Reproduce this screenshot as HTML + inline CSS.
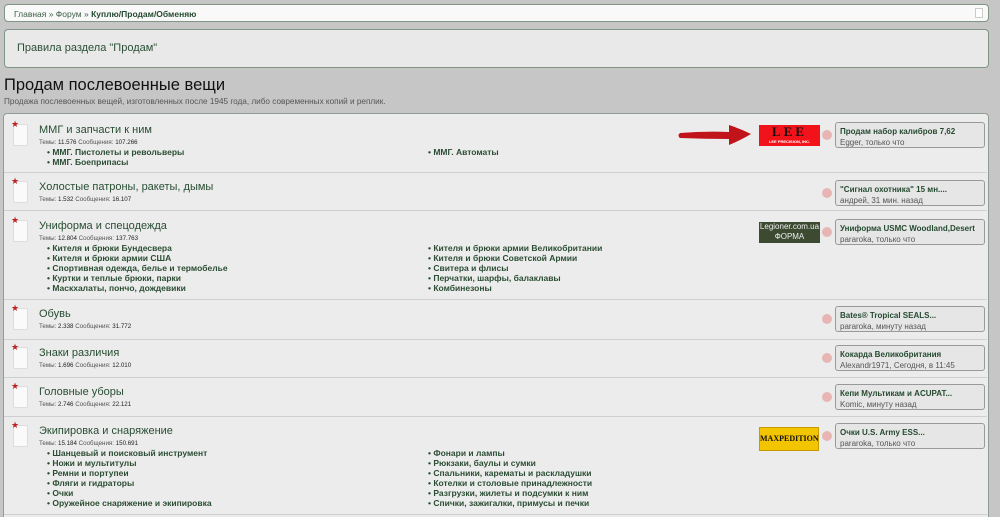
<!DOCTYPE html>
<html><head><meta charset="utf-8"><style>
*{margin:0;padding:0;box-sizing:border-box}
html,body{width:1000px;height:517px;overflow:hidden}
body{background:#c6c6c6;font-family:"Liberation Sans","DejaVu Sans",sans-serif;position:relative}
.a{position:absolute}
.bc{left:4px;top:4px;width:985px;height:18px;background:#f9f9f9;border:1px solid #7f9585;border-radius:4px;font-size:8.5px;color:#3d5f47;padding:4px 0 0 9px}
.bc b{color:#254a30}
.rules{left:4px;top:29px;width:985px;height:39px;background:#e9e9e9;border:1px solid #7f9585;border-radius:4px;font-size:11px;color:#2a4f35;padding:12px 0 0 12px}
h1{position:absolute;left:4px;top:76px;font-size:16.5px;font-weight:normal;color:#111}
.desc{left:4px;top:97px;font-size:8.2px;color:#555}
.box{left:3px;top:113px;width:986px;height:420px;background:#ececec;border:1px solid #8e9e93;border-radius:4px}
.sep{left:4px;width:983px;height:1px;background:#cfcfcf}
.ic{width:15px;height:22px;background:#fafafa;border:1px solid #ddd;border-radius:2px}
.st{color:#b22;font-size:9px}
.t{font-size:11px;color:#284d33}
.s{font-size:6.2px;color:#555}
.s b{font-weight:normal;color:#222}
.sub{font-size:8.5px;font-weight:bold;color:#2b4d33;line-height:10px}
.lp{left:835px;width:150px;height:26px;background:#e6e6e6;border:1px solid #999;border-radius:3px;font-size:8px;padding:3px 0 0 4px;line-height:11px}
.lp b{color:#254a30}
.lp span{color:#555}
.rss{width:10px;height:10px;border-radius:50%;background:#e8b5b5;left:822px}
</style></head><body>
<div class="a bc">Главная » Форум » <b>Куплю/Продам/Обменяю</b></div>
<div class="a" style="left:975px;top:8px;width:8px;height:10px;background:#fff;border:1px solid #ccc"></div>
<div class="a rules">Правила раздела "Продам"</div>
<h1>Продам послевоенные вещи</h1>
<div class="a desc">Продажа послевоенных вещей, изготовленных после 1945 года, либо современных копий и реплик.</div>
<div class="a box"></div>
<div class="a sep" style="top:172px"></div>
<div class="a sep" style="top:210px"></div>
<div class="a sep" style="top:299px"></div>
<div class="a sep" style="top:339px"></div>
<div class="a sep" style="top:377px"></div>
<div class="a sep" style="top:416px"></div>
<div class="a sep" style="top:514px"></div>

<div class="a ic" style="left:13px;top:124px"></div><div class="a st" style="left:11px;top:119px">★</div>
<div class="a ic" style="left:13px;top:181px"></div><div class="a st" style="left:11px;top:176px">★</div>
<div class="a ic" style="left:13px;top:220px"></div><div class="a st" style="left:11px;top:215px">★</div>
<div class="a ic" style="left:13px;top:308px"></div><div class="a st" style="left:11px;top:303px">★</div>
<div class="a ic" style="left:13px;top:347px"></div><div class="a st" style="left:11px;top:342px">★</div>
<div class="a ic" style="left:13px;top:386px"></div><div class="a st" style="left:11px;top:381px">★</div>
<div class="a ic" style="left:13px;top:425px"></div><div class="a st" style="left:11px;top:420px">★</div>

<div class="a t" style="left:39px;top:124px">ММГ и запчасти к ним</div>
<div class="a s" style="left:39px;top:139px">Темы: <b>11.576</b> Сообщения: <b>107.266</b></div>
<div class="a sub" style="left:47px;top:147px">• ММГ. Пистолеты и револьверы<br>• ММГ. Боеприпасы</div>
<div class="a sub" style="left:428px;top:147px">• ММГ. Автоматы</div>

<div class="a t" style="left:39px;top:181px">Холостые патроны, ракеты, дымы</div>
<div class="a s" style="left:39px;top:196px">Темы: <b>1.532</b> Сообщения: <b>16.107</b></div>

<div class="a t" style="left:39px;top:220px">Униформа и спецодежда</div>
<div class="a s" style="left:39px;top:235px">Темы: <b>12.804</b> Сообщения: <b>137.763</b></div>
<div class="a sub" style="left:47px;top:243px">• Кителя и брюки Бундесвера<br>• Кителя и брюки армии США<br>• Спортивная одежда, белье и термобелье<br>• Куртки и теплые брюки, парки<br>• Маскхалаты, пончо, дождевики</div>
<div class="a sub" style="left:428px;top:243px">• Кителя и брюки армии Великобритании<br>• Кителя и брюки Советской Армии<br>• Свитера и флисы<br>• Перчатки, шарфы, балаклавы<br>• Комбинезоны</div>

<div class="a t" style="left:39px;top:308px">Обувь</div>
<div class="a s" style="left:39px;top:323px">Темы: <b>2.338</b> Сообщения: <b>31.772</b></div>

<div class="a t" style="left:39px;top:347px">Знаки различия</div>
<div class="a s" style="left:39px;top:362px">Темы: <b>1.696</b> Сообщения: <b>12.010</b></div>

<div class="a t" style="left:39px;top:386px">Головные уборы</div>
<div class="a s" style="left:39px;top:401px">Темы: <b>2.746</b> Сообщения: <b>22.121</b></div>

<div class="a t" style="left:39px;top:425px">Экипировка и снаряжение</div>
<div class="a s" style="left:39px;top:440px">Темы: <b>15.184</b> Сообщения: <b>150.691</b></div>
<div class="a sub" style="left:47px;top:448px">• Шанцевый и поисковый инструмент<br>• Ножи и мультитулы<br>• Ремни и портупеи<br>• Фляги и гидраторы<br>• Очки<br>• Оружейное снаряжение и экипировка</div>
<div class="a sub" style="left:428px;top:448px">• Фонари и лампы<br>• Рюкзаки, баулы и сумки<br>• Спальники, карематы и раскладушки<br>• Котелки и столовые принадлежности<br>• Разгрузки, жилеты и подсумки к ним<br>• Спички, зажигалки, примусы и печки</div>

<svg class="a" style="left:675px;top:122px" width="80" height="26"><path d="M5 11 Q30 9 54 10 L54 3 Q66 7 76 12 Q66 18 54 23 L54 17 Q30 17 5 16 Q2 13.5 5 11 Z" fill="#c0141a"/></svg>
<div class="a" style="left:759px;top:125px;width:61px;height:21px;background:#f2131a;text-align:center;font-family:'Liberation Serif',serif;font-weight:bold;color:#111;font-size:13px;line-height:14px;letter-spacing:3px">LEE<div style="font-family:'Liberation Sans';font-size:4px;color:#fff;letter-spacing:0;line-height:5px">LEE PRECISION, INC.</div></div>
<div class="a" style="left:759px;top:222px;width:61px;height:21px;background:#3c4a32;color:#eee;font-size:8px;text-align:center;line-height:10px">Legioner.com.ua<br>ФОРМА</div>
<div class="a" style="left:759px;top:427px;width:60px;height:24px;background:#f3c500;border:1px solid #c89a00;color:#111;font-family:'Liberation Serif',serif;font-weight:bold;font-size:8px;text-align:center;line-height:22px">MAXPEDITION</div>

<div class="a rss" style="top:130px"></div>
<div class="a rss" style="top:188px"></div>
<div class="a rss" style="top:227px"></div>
<div class="a rss" style="top:314px"></div>
<div class="a rss" style="top:353px"></div>
<div class="a rss" style="top:392px"></div>
<div class="a rss" style="top:431px"></div>

<div class="a lp" style="top:122px"><b>Продам набор калибров 7,62</b><br><span>Egger, только что</span></div>
<div class="a lp" style="top:180px"><b>"Сигнал охотника" 15 мн....</b><br><span>андрей, 31 мин. назад</span></div>
<div class="a lp" style="top:219px"><b>Униформа USMC Woodland,Desert</b><br><span>pararoka, только что</span></div>
<div class="a lp" style="top:306px"><b>Bates® Tropical SEALS...</b><br><span>pararoka, минуту назад</span></div>
<div class="a lp" style="top:345px"><b>Кокарда Великобритания</b><br><span>Alexandr1971, Сегодня, в 11:45</span></div>
<div class="a lp" style="top:384px"><b>Кепи Мультикам и ACUPAT...</b><br><span>Komic, минуту назад</span></div>
<div class="a lp" style="top:423px"><b>Очки U.S. Army ESS...</b><br><span>pararoka, только что</span></div>
</body></html>
